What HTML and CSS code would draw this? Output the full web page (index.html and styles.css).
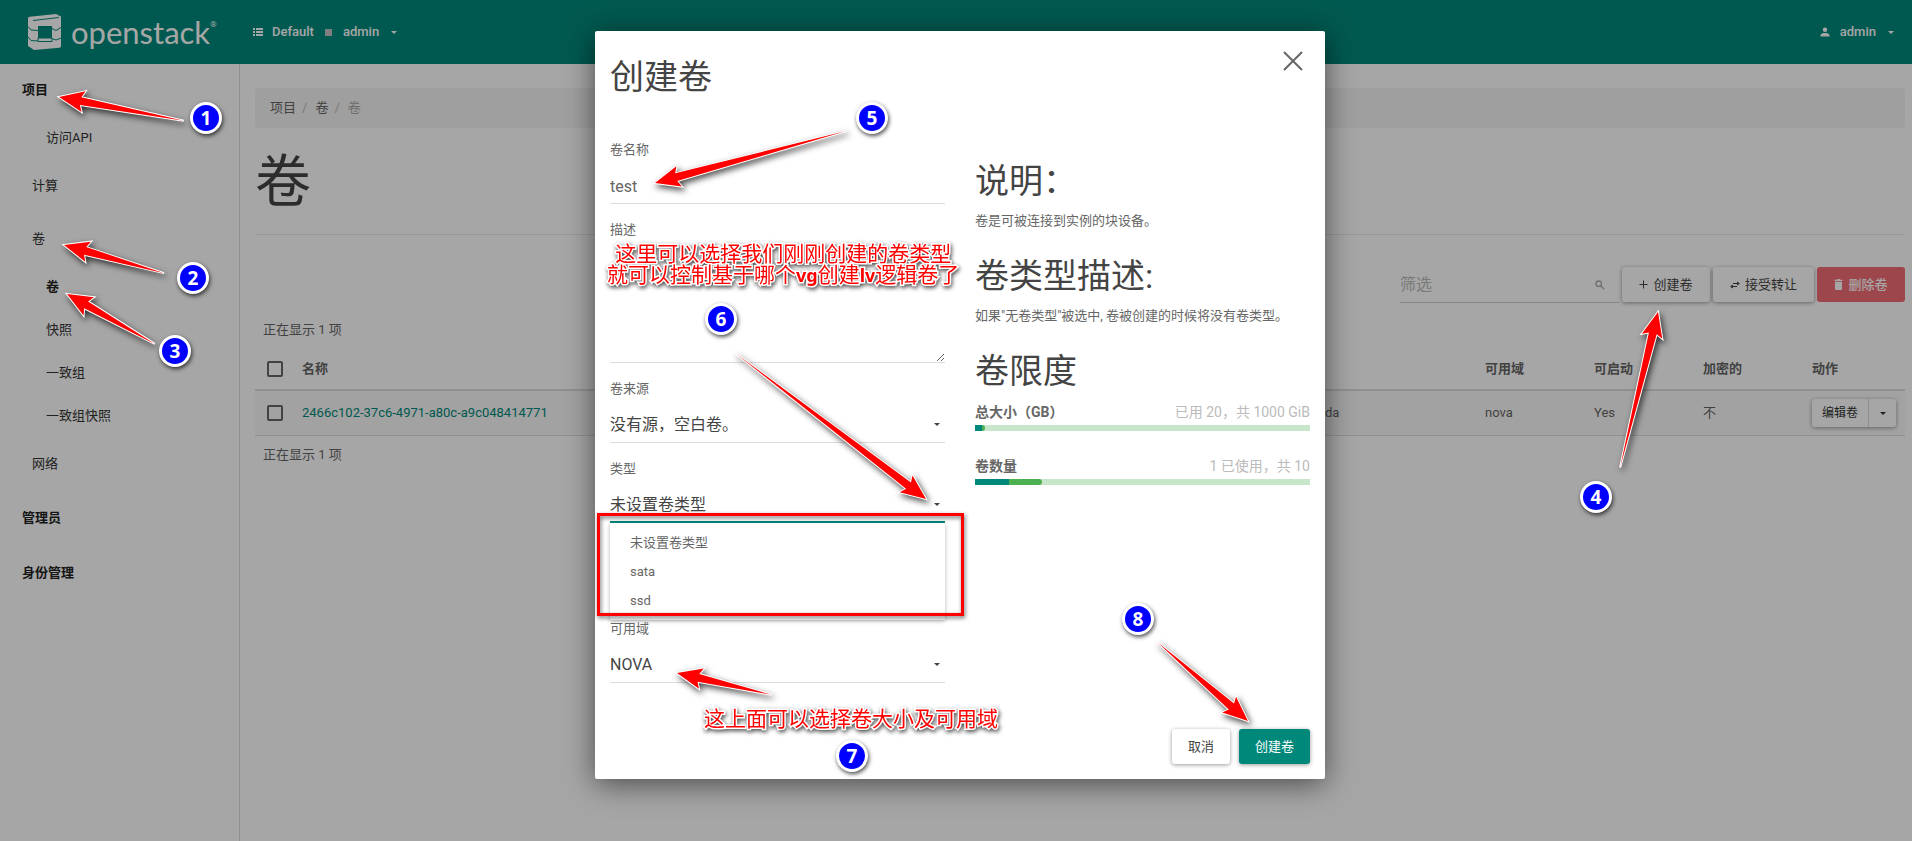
FILE: index.html
```html
<!DOCTYPE html>
<html lang="zh-CN">
<head>
<meta charset="utf-8">
<title>卷 - OpenStack Dashboard</title>
<link rel="stylesheet" href="styles.css">
</head>
<body>
<div class="page">
  <header class="topbar">
    <a class="brand" href="#">
      <svg class="brand-mark" viewBox="0 0 34 36" aria-hidden="true">
        <path class="brand-fill" fill-rule="evenodd" d="M0 4.500Q0 3 1.500 2.800L28 0L33 2.500V32Q33 33.500 31.500 33.700L6 36L0 32ZM10 12V24.500H24V12Z"/>
        <path class="brand-line" d="M5 6.500L31 3.500M0 12.500L3 16L10 16.500M0 23L3 26.500L10 27V24M10 27.500H24V24M24 14.500L28 16.500L33 13.500M24 24.500L28 26L33 24"/>
      </svg>
      <span class="brand-name">openstack</span><span class="brand-reg">®</span>
    </a>
    <button class="nav-pick" type="button">
      <svg class="icon-list" viewBox="0 0 10 8" aria-hidden="true"><path fill="currentColor" d="M0 0h2v2H0zM3 0h7v2H3zM0 3h2v2H0zM3 3h7v2H3zM0 6h2v2H0zM3 6h7v2H3z"/></svg>
      <span>Default</span><i class="dot"></i><span>admin</span><i class="caret"></i>
    </button>
    <button class="nav-user" type="button">
      <svg class="icon-user" viewBox="0 0 10 10" aria-hidden="true"><path fill="currentColor" d="M5 0.500a2.200 2.200 0 1 1 0 4.500a2.200 2.200 0 1 1 0-4.500zM0.500 9.500V8.200C0.500 6.500 3 6 5 6s4.500.5 4.500 2.200v1.300z"/></svg>
      <span>admin</span><i class="caret"></i>
    </button>
  </header>
  <div class="shell">
    <nav class="sidebar">
      <a class="l1" href="#">项目</a>
      <a class="l3" href="#">访问API</a>
      <a class="l2" href="#">计算</a>
      <a class="l2" href="#">卷</a>
      <a class="l3 active" href="#">卷</a>
      <a class="l3" href="#">快照</a>
      <a class="l3" href="#">一致组</a>
      <a class="l3" href="#">一致组快照</a>
      <a class="l2" href="#">网络</a>
      <a class="l1" href="#">管理员</a>
      <a class="l1" href="#">身份管理</a>
    </nav>
    <main class="content">
      <div class="breadcrumb"><a href="#">项目</a><i>/</i><a href="#">卷</a><i>/</i><span>卷</span></div>
      <h1>卷</h1>
      <div class="toolbar">
        <label class="search"><input type="text" placeholder="筛选" aria-label="筛选">
          <svg class="icon-search" viewBox="0 0 10 10" aria-hidden="true"><path fill="none" stroke="currentColor" stroke-width="1.300" d="M3.700 1a2.700 2.700 0 1 0 0 5.400a2.700 2.700 0 1 0 0-5.400zM5.700 5.700L9.300 9.300"/></svg>
        </label>
        <button class="btn btn-tool" type="button"><svg viewBox="0 0 9 9" aria-hidden="true"><path stroke="currentColor" d="M4.500 0.500v8M0.500 4.500h8"/></svg>创建卷</button>
        <button class="btn btn-tool" type="button"><svg class="swap" viewBox="0 0 10 8" aria-hidden="true"><path fill="none" stroke="currentColor" d="M3 2.500h5M2 5.500h5"/><path fill="currentColor" d="M7 0.500l3 2l-3 2zM3 3.500l-3 2l3 2z"/></svg>接受转让</button>
        <button class="btn btn-tool btn-danger" type="button"><svg viewBox="0 0 9 11" aria-hidden="true"><path fill="currentColor" d="M0.500 0.700h2.500l.5-.7h2l.5.700h2.500v1.300h-8zM1 2.800h7v7q0 1.200-1 1.200h-5q-1 0-1-1.200z"/></svg>删除卷</button>
      </div>
      <p class="count">正在显示 1 项</p>
      <table class="volumes">
        <thead><tr>
          <th class="c-check"><input type="checkbox" aria-label="全选"></th>
          <th class="c-name">名称</th><th class="c-host"></th><th class="c-std">可用域</th><th class="c-std">可启动</th><th class="c-std">加密的</th><th class="c-act">动作</th>
        </tr></thead>
        <tbody><tr>
          <td><input type="checkbox" aria-label="选择卷"></td>
          <td><a href="#">2466c102-37c6-4971-a80c-a9c048414771</a></td>
          <td class="host">da</td><td>nova</td><td>Yes</td><td>不</td>
          <td><div class="split"><button type="button">编辑卷</button><button class="more" type="button" aria-label="更多"><i class="caret"></i></button></div></td>
        </tr></tbody>
      </table>
      <p class="count count-end">正在显示 1 项</p>
    </main>
  </div>
</div>

<div class="backdrop">
  <form class="modal" role="dialog" aria-label="创建卷">
    <div class="modal-head">
      <h2>创建卷</h2>
      <button class="close" type="button" aria-label="关闭"><svg viewBox="0 0 20 20" aria-hidden="true"><path stroke="currentColor" stroke-width="2" d="M1 1L19 19M19 1L1 19"/></svg></button>
    </div>
    <div class="modal-body">
      <div class="fields">
        <div class="field"><label for="name">卷名称</label><input id="name" type="text" value="test"></div>
        <div class="field"><label for="desc">描述</label><textarea id="desc"></textarea></div>
        <div class="field"><label for="source">卷来源</label><div class="pick"><select id="source"><option>没有源，空白卷。</option></select><i class="caret"></i></div></div>
        <div class="field open"><label for="type">类型</label><div class="pick"><select id="type"><option>未设置卷类型</option></select><i class="caret"></i></div>
          <ul class="menu"><li>未设置卷类型</li><li>sata</li><li>ssd</li></ul>
        </div>
        <div class="field"><label for="zone">可用域</label><div class="pick"><select id="zone"><option>NOVA</option></select><i class="caret"></i></div></div>
      </div>
      <div class="help">
        <h2>说明：</h2>
        <p>卷是可被连接到实例的块设备。</p>
        <h2>卷类型描述:</h2>
        <p>如果"无卷类型"被选中, 卷被创建的时候将没有卷类型。</p>
        <h2>卷限度</h2>
        <div class="quota"><div class="quota-row"><b>总大小（GB）</b><span>已用 20，共 1000 GiB</span></div><div class="bar"><i class="used" style="width:2%"></i><i class="added" style="width:1%"></i></div></div>
        <div class="quota"><div class="quota-row"><b>卷数量</b><span>1 已使用，共 10</span></div><div class="bar"><i class="used" style="width:10%"></i><i class="added" style="width:10%"></i></div></div>
      </div>
    </div>
    <div class="modal-foot">
      <button class="btn btn-plain" type="button">取消</button>
      <button class="btn btn-primary" type="button">创建卷</button>
    </div>
  </form>
</div>

<div class="notes">
  <div class="frame"></div>
  <svg class="arrows" aria-hidden="true">
    <g transform="translate(59 97) rotate(10.800)"><path d="M0 0L25-10.500L22-4L127 0L22 4L25 10.500Z"/></g>
    <g transform="translate(64 245) rotate(15.700)"><path d="M0 0L25-10.500L22-4L104 0L22 4L25 10.500Z"/></g>
    <g transform="translate(67 294) rotate(29.600)"><path d="M0 0L25-10.500L22-4L101 0L22 4L25 10.500Z"/></g>
    <g transform="translate(1658 312) rotate(103.700)"><path d="M0 0L25-10.500L22-4L160 0L22 4L25 10.500Z"/></g>
    <g transform="translate(655 183) rotate(-15.200)"><path d="M0 0L25-10.500L22-4L198 0L22 4L25 10.500Z"/></g>
    <g transform="translate(926 499) rotate(217.400)"><path d="M0 0L25-10.500L22-4L240 0L22 4L25 10.500Z"/></g>
    <g transform="translate(677 673) rotate(13)"><path d="M0 0L25-10.500L22-4L97 0L22 4L25 10.500Z"/></g>
    <g transform="translate(1248 721) rotate(221)"><path d="M0 0L25-10.500L22-4L120 0L22 4L25 10.500Z"/></g>
  </svg>
  <span class="pin p1">1</span><span class="pin p2">2</span><span class="pin p3">3</span><span class="pin p4">4</span>
  <span class="pin p5">5</span><span class="pin p6">6</span><span class="pin p7">7</span><span class="pin p8">8</span>
  <p class="tip tip-type">这里可以选择我们刚刚创建的卷类型<br>就可以控制基于哪个<b>vg</b>创建<b>lv</b>逻辑卷了</p>
  <p class="tip tip-zone">这上面可以选择卷大小及可用域</p>
</div>
</body>
</html>
```
FILE: styles.css
```css
* { box-sizing: border-box; }
body {
  margin: 0;
  position: relative;
  min-height: 100vh;
  overflow: hidden;
  background: #fff;
  color: #666;
  font: 13px/18px Roboto, "Noto Sans CJK SC", sans-serif;
}
a { color: inherit; text-decoration: none; }
p, h1, h2, ul { margin: 0; padding: 0; font-weight: 400; }
button, input, select, textarea { font: inherit; color: inherit; border: 0; padding: 0; margin: 0; background: none; border-radius: 0; outline: 0; }
.page { min-height: 100vh; display: flex; flex-direction: column; }
.caret { display: inline-block; border: 3px solid transparent; border-top-color: currentColor; border-bottom: 0; }

/* top bar */
.topbar { display: flex; align-items: center; height: 64px; padding: 0 18px 0 28px; background: #00897b; color: #fff; }
.brand { display: flex; align-items: center; width: 225px; }
.brand-mark { width: 34px; height: 36px; margin-right: 9px; }
.brand-fill { fill: #fff; }
.brand-line { fill: none; stroke: #00897b; stroke-width: 1; }
.brand-name { font: 400 31px/44px Lato, sans-serif; }
.brand-reg { font-size: 8px; align-self: flex-start; padding-top: 6px; }
.nav-pick, .nav-user { display: flex; align-items: center; height: 64px; font-weight: 500; }
.nav-user { margin-left: auto; }
.icon-list { width: 10px; height: 8px; margin-right: 9px; }
.icon-user { width: 10px; height: 10px; margin-right: 10px; }
.dot { width: 7px; height: 7px; margin: 0 11px; background: #c4c4c4; }
.nav-pick .caret, .nav-user .caret { margin-left: 12px; }

/* side navigation */
.shell { display: flex; flex: 1; }
.sidebar { display: flex; flex-direction: column; width: 240px; border-right: 1px solid #ddd; color: #333; }
.sidebar a { display: flex; align-items: center; }
.sidebar .l1 { height: 55px; padding-left: 22px; font-weight: 700; color: #212121; }
.sidebar .l1:first-child { height: 52px; }
.sidebar .l2 { height: 53px; padding-left: 32px; }
.sidebar .l3 { height: 43px; padding-left: 46px; }
.sidebar .active { font-weight: 700; color: #212121; }

/* volumes page */
.content { flex: 1; padding: 24px 7px 0 15px; }
.breadcrumb { display: flex; align-items: center; height: 40px; padding: 0 15px; border-radius: 3px; background: #f4f4f4; }
.breadcrumb i { padding: 0 8px 0 6px; color: #bbb; font-style: normal; }
.breadcrumb span { color: #aaa; }
h1 { height: 107px; padding-top: 19px; border-bottom: 1px solid #eaeaea; color: #444; font-size: 56px; line-height: 70px; }
.toolbar { display: flex; justify-content: flex-end; gap: 3px; margin-top: 32px; }
.search { display: flex; align-items: center; width: 219px; height: 36px; padding-right: 14px; border-bottom: 1px solid #ccc; color: #bbb; }
.search input { flex: 1; min-width: 0; font-size: 16px; }
.search input::placeholder { color: #bbb; }
.icon-search { width: 10px; height: 10px; color: #aaa; }
.btn { display: flex; align-items: center; justify-content: center; height: 35px; padding: 0 16px; border-radius: 3px; background: #fff; color: #444; box-shadow: 0 1px 4px rgba(0, 0, 0, .4); }
.btn svg { width: 9px; height: 11px; margin-right: 5px; }
.btn svg.swap { width: 10px; height: 8px; }
.btn-tool { min-width: 88px; padding: 0 17px; }
.btn-danger { background: #f16c75; color: #fff; font-weight: 500; box-shadow: none; }
.count { margin: 18px 0 0 8px; }
.count-end { margin-top: 10px; }
.volumes { width: 100%; margin-top: 9px; border-collapse: collapse; table-layout: fixed; }
.volumes th { height: 42px; padding: 0 7px; border-bottom: 2px solid #ddd; text-align: left; font-weight: 700; }
.volumes td { height: 45px; padding: 0 7px; border-bottom: 1px solid #ddd; }
.volumes tbody tr { background: #f9f9f9; }
.volumes a { color: #00897b; }
.c-check { width: 40px; }
.c-name { width: 1023px; }
.c-host { width: auto; }
.c-std { width: 109px; }
.c-act { width: 100px; }
.volumes input { appearance: none; display: block; width: 16px; height: 16px; margin-left: 5px; border: 2px solid #666; border-radius: 2px; }
.split { display: inline-flex; height: 28px; border-radius: 3px; background: #fff; box-shadow: 0 1px 4px rgba(0, 0, 0, .4); color: #333; font-size: 12px; vertical-align: middle; }
.split button { padding: 0 10px; }
.split .more { width: 28px; padding: 0; border-left: 1px solid #ddd; }
.split .caret { vertical-align: middle; }

/* dialog */
.backdrop { position: absolute; inset: 0; display: flex; justify-content: center; align-items: flex-start; padding: 31px 0 0 8px; background: rgba(0, 0, 0, .35); }
.modal { width: 730px; padding: 26px 15px 15px; border-radius: 2px; background: #fff; box-shadow: 0 5px 30px rgba(0, 0, 0, .55); }
.modal h2 { color: #444; font-size: 34px; line-height: 40px; }
.modal-head { display: flex; justify-content: space-between; align-items: flex-start; height: 84px; }
.close { width: 20px; height: 20px; margin: -6px 7px 0 0; color: #666; }
.close svg { display: block; width: 20px; height: 20px; }
.modal-body { display: grid; grid-template-columns: 1fr 1fr; gap: 30px; }
.field { display: flex; flex-direction: column; gap: 8px; margin-bottom: 17px; }
.field input, .field select { width: 100%; height: 37px; padding-top: 2px; border-bottom: 1px solid #ddd; font-size: 16px; }
.field select { appearance: none; color: #444; }
.field textarea { height: 116px; border-bottom: 1px solid #ddd; font-size: 16px; resize: vertical; }
.pick { display: flex; align-items: center; }
.pick .caret { margin-left: -11px; margin-right: 5px; color: #444; }
.open { gap: 0; margin-bottom: 0; }
.open label { margin-bottom: 8px; }
.open select { border-bottom: 2px solid #00897b; }
.menu { height: 97px; padding: 5px 20px; list-style: none; line-height: 29px; box-shadow: 0 1px 4px rgba(0, 0, 0, .3); }
.help { padding-top: 20px; }
.help h2 { margin-bottom: 11px; }
.help p { margin-bottom: 26px; white-space: nowrap; }
.quota { margin-bottom: 25px; }
.quota-row { display: flex; justify-content: space-between; margin-bottom: 3px; font-size: 14px; line-height: 20px; }
.quota-row span { color: #bbb; }
.bar { display: flex; height: 6px; background: #c8e6c9; }
.used { background: #00897b; }
.added { border-radius: 0 3px 3px 0; background: #4caf50; }
.modal-foot { display: flex; justify-content: flex-end; gap: 9px; padding-top: 29px; }
.btn-primary { background: #00897b; color: #fff; }

/* walkthrough notes, placed freely over the page */
.notes { position: absolute; inset: 0; overflow: hidden; pointer-events: none; }
.frame { position: absolute; left: 597px; top: 513px; width: 367px; height: 103px; border: 3px solid #f00; filter: drop-shadow(1px 2px 2px rgba(0, 0, 0, .6)); }
.arrows { position: absolute; inset: 0; width: 100%; height: 100%; filter: drop-shadow(2px 3px 3px rgba(0, 0, 0, .7)); }
.arrows path { fill: #f00; stroke: #fff; stroke-width: 2; paint-order: stroke; }
.pin { position: absolute; width: 32px; height: 32px; border: 3px solid #fff; border-radius: 50%; background: #00f; color: #fff; text-align: center; font: 700 19px/26px "Noto Sans", sans-serif; box-shadow: 1px 2px 4px rgba(0, 0, 0, .7); }
.p1 { left: 190px; top: 102px; }
.p2 { left: 177px; top: 262px; }
.p3 { left: 159px; top: 335px; }
.p4 { left: 1580px; top: 481px; }
.p5 { left: 856px; top: 102px; }
.p6 { left: 705px; top: 303px; }
.p7 { left: 836px; top: 740px; }
.p8 { left: 1122px; top: 603px; }
.tip { position: absolute; color: #f00; font-size: 21px; line-height: 21px; text-align: center; white-space: nowrap; -webkit-text-stroke: 3px #fff; paint-order: stroke fill; filter: drop-shadow(1px 2px 2px rgba(0, 0, 0, .7)); }
.tip b { font: 700 18px/21px "Noto Sans", sans-serif; }
.tip-type { left: 607px; top: 244px; }
.tip-zone { left: 704px; top: 709px; }
```
